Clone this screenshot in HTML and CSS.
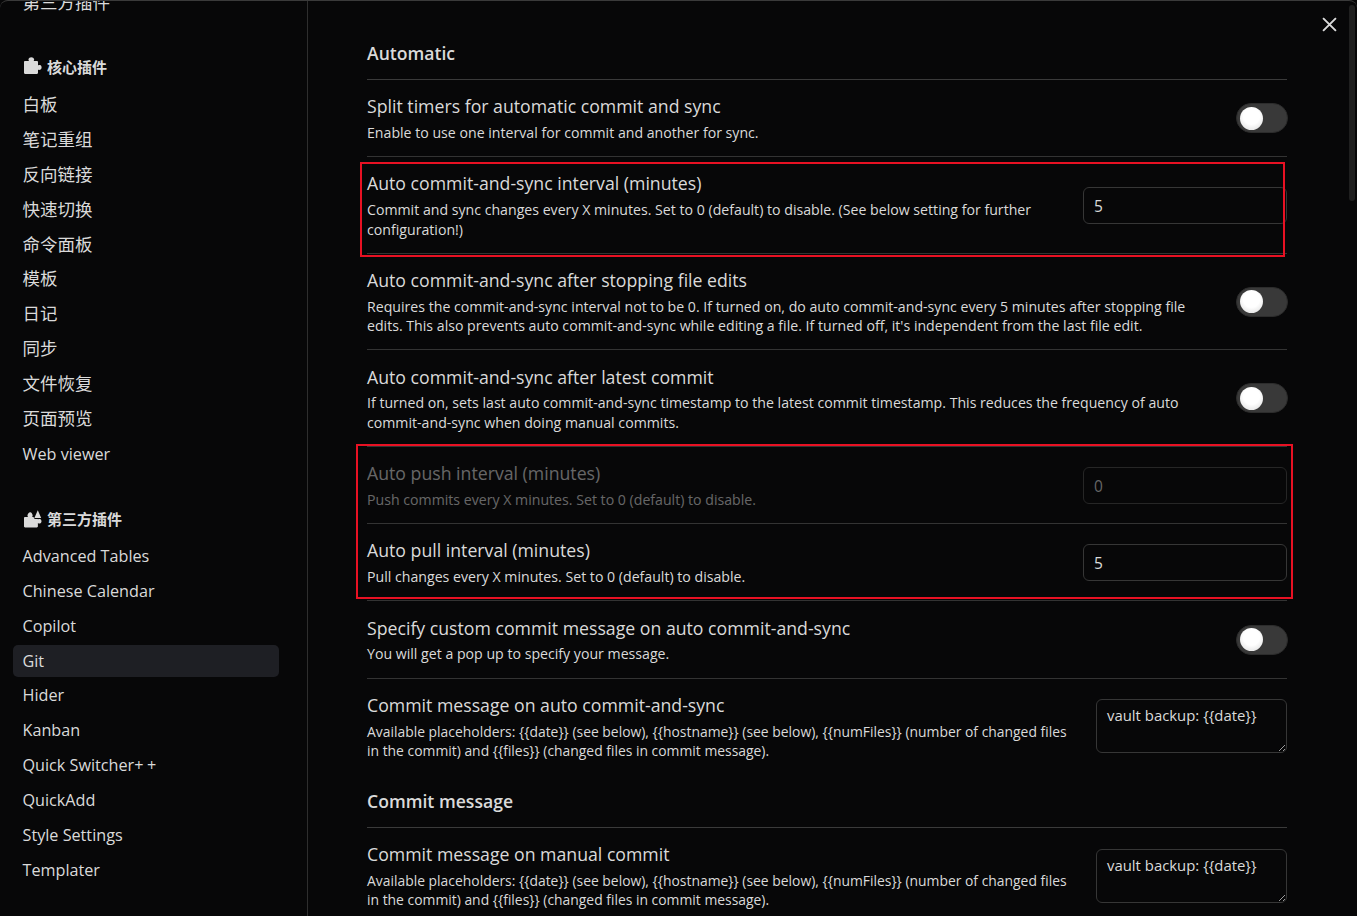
FILE: index.html
```html
<!DOCTYPE html>
<html lang="zh">
<head>
<meta charset="utf-8">
<title>Settings</title>
<link rel="stylesheet" href="styles.css">
</head>
<body>
<div class="modal">
  <nav class="sidebar">
    <div class="nav-item zh clipped">第三方插件</div>
    <div class="group-title first">
      <svg class="puzzle" viewBox="0 0 18 18"><path d="M0 5.200c0-.7.400-1.100 1.100-1.100h3.900c-.5-.7-.7-1.300-.5-2C4.800 1 5.900.2 7.300.2s2.500.8 2.800 1.900c.2.700 0 1.300-.5 2h3.300c.7 0 1.100.4 1.100 1.100v3.200c.7-.5 1.400-.6 2-.4.9.3 1.600 1.200 1.600 2.400s-.7 2.100-1.600 2.400c-.6.200-1.300.1-2-.4v3.400c0 .7-.4 1.100-1.100 1.100H1.100c-.7 0-1.100-.4-1.100-1.100z"/></svg>
      <span>核心插件</span>
    </div>
    <div class="nav-item zh">白板</div>
    <div class="nav-item zh">笔记重组</div>
    <div class="nav-item zh">反向链接</div>
    <div class="nav-item zh">快速切换</div>
    <div class="nav-item zh">命令面板</div>
    <div class="nav-item zh">模板</div>
    <div class="nav-item zh">日记</div>
    <div class="nav-item zh">同步</div>
    <div class="nav-item zh">文件恢复</div>
    <div class="nav-item zh">页面预览</div>
    <div class="nav-item">Web viewer</div>
    <div class="group-title">
      <svg class="puzzle" viewBox="0 0 18 18"><path d="M0 8.200c0-.7.400-1.100 1.100-1.100h2.900c-.5-.7-.7-1.300-.5-2C3.800 4 4.800 2.200 6.200 2.200s2.100 1.800 2.400 2.900c.2.700 0 1.300-.5 2h1.300l1.300 2h3.200v.3c.7-.5 1.400-.6 2-.4.900.3 1.600 1.100 1.600 2.200s-.7 1.900-1.600 2.200c-.6.200-1.300.1-2-.4v3.300c0 .7-.4 1.100-1.100 1.100H1.100c-.7 0-1.100-.4-1.100-1.100z"/><path d="M13.800.3l3.400 7.700h-6.800z"/></svg>
      <span>第三方插件</span>
    </div>
    <div class="nav-item">Advanced Tables</div>
    <div class="nav-item">Chinese Calendar</div>
    <div class="nav-item">Copilot</div>
    <div class="nav-item active">Git</div>
    <div class="nav-item">Hider</div>
    <div class="nav-item">Kanban</div>
    <div class="nav-item">Quick Switcher<span class="plus">++</span></div>
    <div class="nav-item">QuickAdd</div>
    <div class="nav-item">Style Settings</div>
    <div class="nav-item">Templater</div>
  </nav>
  <main class="content">
    <h2 class="heading">Automatic</h2>
    <section class="row">
      <div class="info"><div class="name">Split timers for automatic commit and sync</div><div class="desc">Enable to use one interval for commit and another for sync.</div></div>
      <div class="toggle"><span class="knob"></span></div>
    </section>
    <section class="row">
      <div class="info"><div class="name">Auto commit-and-sync interval (minutes)</div><div class="desc">Commit and sync changes every X minutes. Set to 0 (default) to disable. (See below setting for further configuration!)</div></div>
      <input class="field" type="text" value="5">
    </section>
    <section class="row">
      <div class="info"><div class="name">Auto commit-and-sync after stopping file edits</div><div class="desc">Requires the commit-and-sync interval not to be 0. If turned on, do auto commit-and-sync every 5 minutes after stopping file edits. This also prevents auto commit-and-sync while editing a file. If turned off, it's independent from the last file edit.</div></div>
      <div class="toggle"><span class="knob"></span></div>
    </section>
    <section class="row">
      <div class="info"><div class="name">Auto commit-and-sync after latest commit</div><div class="desc">If turned on, sets last auto commit-and-sync timestamp to the latest commit timestamp. This reduces the frequency of auto commit-and-sync when doing manual commits.</div></div>
      <div class="toggle"><span class="knob"></span></div>
    </section>
    <section class="row disabled">
      <div class="info"><div class="name">Auto push interval (minutes)</div><div class="desc">Push commits every X minutes. Set to 0 (default) to disable.</div></div>
      <input class="field" type="text" value="0" disabled>
    </section>
    <section class="row">
      <div class="info"><div class="name">Auto pull interval (minutes)</div><div class="desc">Pull changes every X minutes. Set to 0 (default) to disable.</div></div>
      <input class="field" type="text" value="5">
    </section>
    <section class="row">
      <div class="info"><div class="name">Specify custom commit message on auto commit-and-sync</div><div class="desc">You will get a pop up to specify your message.</div></div>
      <div class="toggle"><span class="knob"></span></div>
    </section>
    <section class="row plain">
      <div class="info"><div class="name">Commit message on auto commit-and-sync</div><div class="desc">Available placeholders: {{date}} (see below), {{hostname}} (see below), {{numFiles}} (number of changed files in the commit) and {{files}} (changed files in commit message).</div></div>
      <textarea class="area">vault backup: {{date}}</textarea>
    </section>
    <h2 class="heading second">Commit message</h2>
    <section class="row plain">
      <div class="info"><div class="name">Commit message on manual commit</div><div class="desc">Available placeholders: {{date}} (see below), {{hostname}} (see below), {{numFiles}} (number of changed files in the commit) and {{files}} (changed files in commit message).</div></div>
      <textarea class="area">vault backup: {{date}}</textarea>
    </section>
  </main>
  <button class="close" aria-label="Close"><svg viewBox="0 0 14 14"><path d="M1 1l12 12M13 1L1 13"/></svg></button>
  <div class="scrollbar"></div>
  <div class="mark mark-a"></div>
  <div class="mark mark-b"></div>
</div>
</body>
</html>
```
FILE: styles.css
```css
* { box-sizing: border-box; }
html, body { margin: 0; height: 100%; overflow: hidden; background: #070708; }
body { font-family: "Open Sans", "Noto Sans CJK SC", sans-serif; color: #dadada; }
.modal { position: relative; display: flex; width: 1357px; height: 916px; overflow: hidden; border-top: 1px solid #3a3a3a; border-radius: 8px 8px 0 0; background: #070708; }
.sidebar { flex: none; width: 308px; height: 915px; padding: 0 28px 0 13px; border-right: 1px solid #2e2e2e; overflow: hidden; }
.nav-item { height: 32px; margin-bottom: 2.900px; padding: 0 9.500px; line-height: 32px; font-size: 16.200px; border-radius: 5px; white-space: nowrap; }
.nav-item.zh { font-size: 17.500px; line-height: 31px; }
.nav-item.clipped { margin-top: -14px; }
.nav-item.active { background: #1e1f24; line-height: 33px; }
.plus { letter-spacing: 3.500px; }
.group-title { display: flex; align-items: center; gap: 5px; height: 34px; margin: 32px 0 4px; padding-left: 11px; font-size: 15px; font-weight: 700; }
.group-title.first { margin: 30px 0 6px; }
.puzzle { flex: none; width: 18px; height: 18px; fill: #dadada; }
.content { flex: 1; min-width: 0; padding: 0 70px 0 59px; }
.heading { margin: 0; height: 79px; padding-top: 39px; line-height: 27px; font-size: 17.600px; font-weight: 600; border-bottom: 1px solid #3a3a3a; }
.heading.second { height: 53.500px; padding-top: 13.500px; }
.row { display: flex; align-items: center; gap: 24px; padding: 14.200px 0 13.900px; border-bottom: 1px solid #333; }
.row.plain { gap: 20px; border-bottom: 0; }
.info { flex: 1; min-width: 0; }
.name { height: 24px; line-height: 24px; margin-bottom: 4.800px; font-size: 17.700px; }
.desc { line-height: 19.350px; font-size: 14.150px; }
.plain .desc { font-size: 13.900px; }
.disabled .name, .disabled .desc { opacity: .45; }
.toggle { flex: none; width: 52px; height: 30px; margin-right: -1px; padding: 2.500px 3px; border: 1px solid #2c2c2c; border-radius: 15px; background: #393939; }
.knob { display: block; width: 23px; height: 23px; border-radius: 50%; background: radial-gradient(circle at 50% 40%, #fff 45%, #d8d8d8 100%); }
.field { flex: none; width: 204px; height: 37px; padding: 2px 10px 0; background: #070708; border: 1px solid #363636; border-radius: 6px; color: #dadada; font: 15.500px "Open Sans", sans-serif; }
.field:disabled { border-color: #262626; color: #666; }
.area { flex: none; width: 191px; height: 54px; padding: 6px 10px; background: #070708; border: 1px solid #363636; border-radius: 6px; color: #dadada; color-scheme: dark; font: 14.900px/19px "Open Sans", sans-serif; }
.close { position: absolute; top: 15px; right: 19px; width: 16px; height: 16px; padding: 0; background: none; border: 0; }
.close svg { display: block; width: 15px; height: 15px; fill: none; stroke: #dadada; stroke-width: 1.800; }
.scrollbar { position: absolute; top: 4px; right: 2px; width: 6px; height: 196px; border-radius: 4px; background: #1f1f1f; }
.mark { position: absolute; border: 2px solid #e81123; }
.mark-a { left: 360px; top: 161px; width: 925px; height: 95px; }
.mark-b { left: 356px; top: 443px; width: 937px; height: 155px; }
```
